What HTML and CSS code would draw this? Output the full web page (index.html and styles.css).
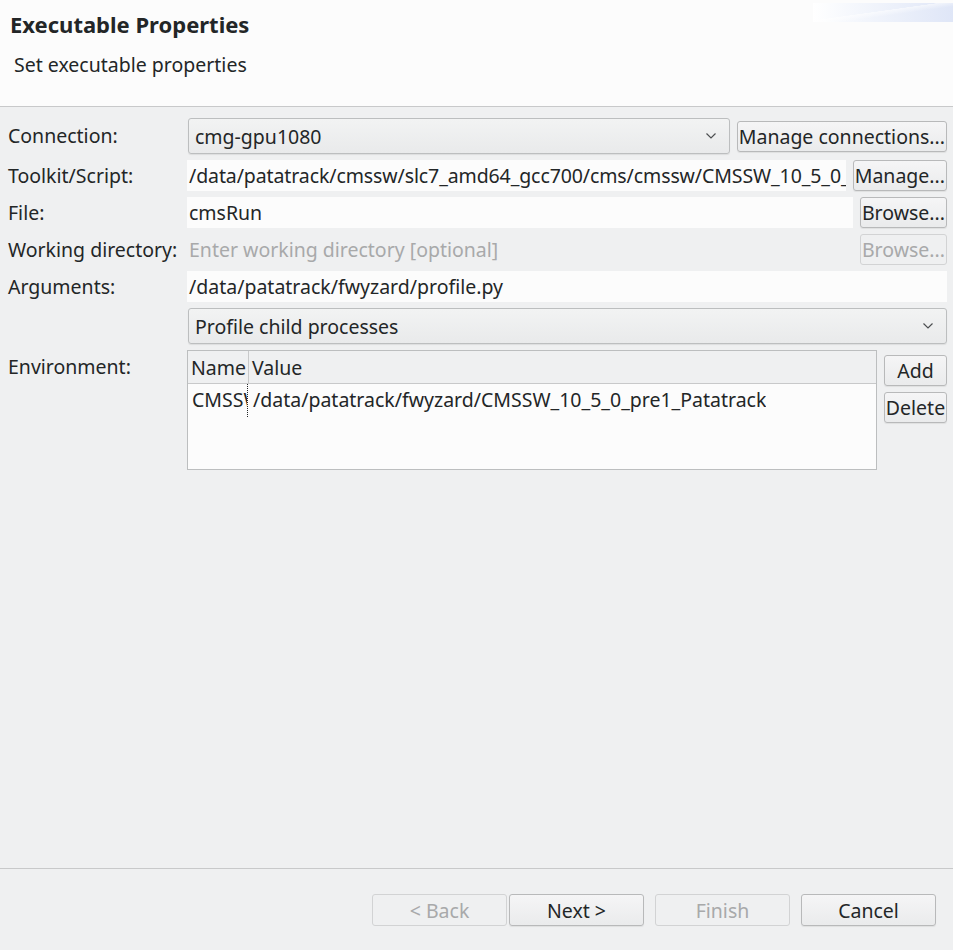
FILE: index.html
```html
<!DOCTYPE html>
<html>
<head>
<meta charset="utf-8">
<link rel="stylesheet" href="styles.css">
</head>
<body>
<div class="dialog">
  <header class="banner">
    <div class="banner-text">
      <div class="title">Executable Properties</div>
      <div class="subtitle">Set executable properties</div>
    </div>
    <div class="banner-image"></div>
  </header>

  <main class="form">
    <label class="lbl">Connection:</label>
    <div class="row">
      <div class="combo grow"><span>cmg-gpu1080</span><svg class="chev" width="12" height="8" viewBox="0 0 12 8"><path d="M1.5 1.5 L6 6 L10.5 1.5" fill="none" stroke="#4d4f51" stroke-width="1.2"/></svg></div>
      <button class="btn">Manage connections...</button>
    </div>

    <label class="lbl">Toolkit/Script:</label>
    <div class="row">
      <div class="field grow tight">/data/patatrack/cmssw/slc7_amd64_gcc700/cms/cmssw/CMSSW_10_5_0_</div>
      <button class="btn">Manage...</button>
    </div>

    <label class="lbl">File:</label>
    <div class="row">
      <div class="field grow">cmsRun</div>
      <button class="btn">Browse...</button>
    </div>

    <label class="lbl">Working directory:</label>
    <div class="row">
      <div class="field disabled grow">Enter working directory [optional]</div>
      <button class="btn dis">Browse...</button>
    </div>

    <label class="lbl">Arguments:</label>
    <div class="row">
      <div class="field grow">/data/patatrack/fwyzard/profile.py</div>
    </div>

    <span></span>
    <div class="row">
      <div class="combo grow"><span>Profile child processes</span><svg class="chev" width="12" height="8" viewBox="0 0 12 8"><path d="M1.5 1.5 L6 6 L10.5 1.5" fill="none" stroke="#4d4f51" stroke-width="1.2"/></svg></div>
    </div>

    <label class="lbl env-lbl">Environment:</label>
    <div class="row top">
      <div class="table grow">
        <div class="thead">
          <div class="th name">Name</div>
          <div class="th value">Value</div>
        </div>
        <div class="tr">
          <div class="td name">CMSSW</div>
          <div class="td value">/data/patatrack/fwyzard/CMSSW_10_5_0_pre1_Patatrack</div>
        </div>
      </div>
      <div class="side">
        <button class="btn side-btn">Add</button>
        <button class="btn side-btn">Delete</button>
      </div>
    </div>
  </main>

  <footer class="footer">
    <button class="btn wiz dis">&lt; Back</button>
    <button class="btn wiz next">Next &gt;</button>
    <button class="btn wiz dis gap">Finish</button>
    <button class="btn wiz gap">Cancel</button>
  </footer>
</div>
</body>
</html>
```
FILE: styles.css
```css
* { box-sizing: border-box; }
html, body { margin: 0; padding: 0; }
body {
  width: 953px;
  height: 950px;
  background: #eff0f1;
  font-family: "Noto Sans", "Open Sans", sans-serif;
  font-size: 19.5px;
  color: #232627;
  overflow: hidden;
}
.dialog {
  display: flex;
  flex-direction: column;
  height: 950px;
}
.banner {
  height: 107px;
  background: #fcfcfc;
  border-bottom: 1px solid #c8c9ca;
  display: flex;
  justify-content: space-between;
  align-items: flex-start;
}
.banner-text { padding: 8px 0 0 10px; }
.title {
  font-weight: bold;
  font-size: 22px;
  line-height: 32px;
}
.subtitle {
  margin: 10px 0 0 4px;
  line-height: 30px;
}
.banner-image {
  width: 140px;
  height: 19px;
  margin-top: 3px;
  background:
    linear-gradient(172deg, rgba(255,255,255,0) 0 45%, rgba(255,255,255,0.55) 46%, rgba(255,255,255,0) 60%),
    linear-gradient(90deg, #ffffff 0%, #f3f6fc 35%, #dfe6f7 100%);
}
.form {
  display: grid;
  grid-template-columns: 179px minmax(0, 1fr);
  row-gap: 6px;
  padding: 11px 6px 0 8px;
  align-items: center;
}
.lbl { line-height: 24px; white-space: nowrap; }
.env-lbl { align-self: start; padding-top: 5px; }
.row {
  display: flex;
  align-items: center;
  gap: 7px;
  min-width: 0;
}
.row.top { align-items: flex-start; }
.grow { flex: 1; min-width: 0; }
.combo {
  height: 36px;
  border: 1px solid #bcbebf;
  border-radius: 3px;
  background: linear-gradient(#f2f3f3, #e9eaeb);
  box-shadow: 0 1px 1px rgba(0,0,0,0.08);
  display: flex;
  align-items: center;
  justify-content: space-between;
  padding: 0 12px 0 6px;
  margin-left: 1px;
}
.chev { display: block; }
.field {
  height: 31px;
  background: #fcfcfc;
  padding: 0 2px;
  line-height: 31px;
  white-space: nowrap;
  overflow: hidden;
}
.field.tight { letter-spacing: -0.1px; }
.field.disabled { background: transparent; color: #a8a9aa; }
.btn {
  font-family: inherit;
  font-size: 19.5px;
  color: #232627;
  height: 31px;
  padding: 0 1px;
  border: 1px solid #b8b9ba;
  border-radius: 3px;
  background: linear-gradient(#f5f5f6, #eaebec);
  box-shadow: 0 1px 1px rgba(0,0,0,0.07);
  line-height: 27px;
  white-space: nowrap;
  flex: none;
}
.btn.dis { color: #a8a9aa; border-color: #d2d3d4; background: #eff0f1; box-shadow: none; }
.table {
  height: 120px;
  border: 1px solid #bcbebf;
  background: #fcfcfc;
  display: flex;
  flex-direction: column;
}
.thead {
  display: flex;
  height: 33px;
  background: #eff0f1;
  border-bottom: 1px solid #c8c9ca;
}
.th {
  line-height: 34px;
  padding-left: 3px;
}
.th.name { width: 61px; border-right: 1px solid #c8c9ca; }
.tr { display: flex; height: 33px; }
.td { line-height: 32px; white-space: nowrap; overflow: hidden; }
.td.name { width: 60px; flex: none; padding-left: 4px; border-right: 1px dotted #232627; }
.td.value { padding-left: 5px; }
.side {
  display: flex;
  flex-direction: column;
  gap: 6px;
  padding-top: 5px;
  flex: none;
}
.side-btn { width: 63px; height: 31px; padding: 0; }
.footer {
  margin-top: auto;
  height: 82px;
  border-top: 1px solid #c8c9ca;
  display: flex;
  justify-content: flex-end;
  align-items: flex-start;
  padding: 25px 17px 0 0;
}
.wiz { width: 135px; height: 32px; }
.wiz.next { margin-left: 2px; }
.wiz.gap { margin-left: 11px; }
```
